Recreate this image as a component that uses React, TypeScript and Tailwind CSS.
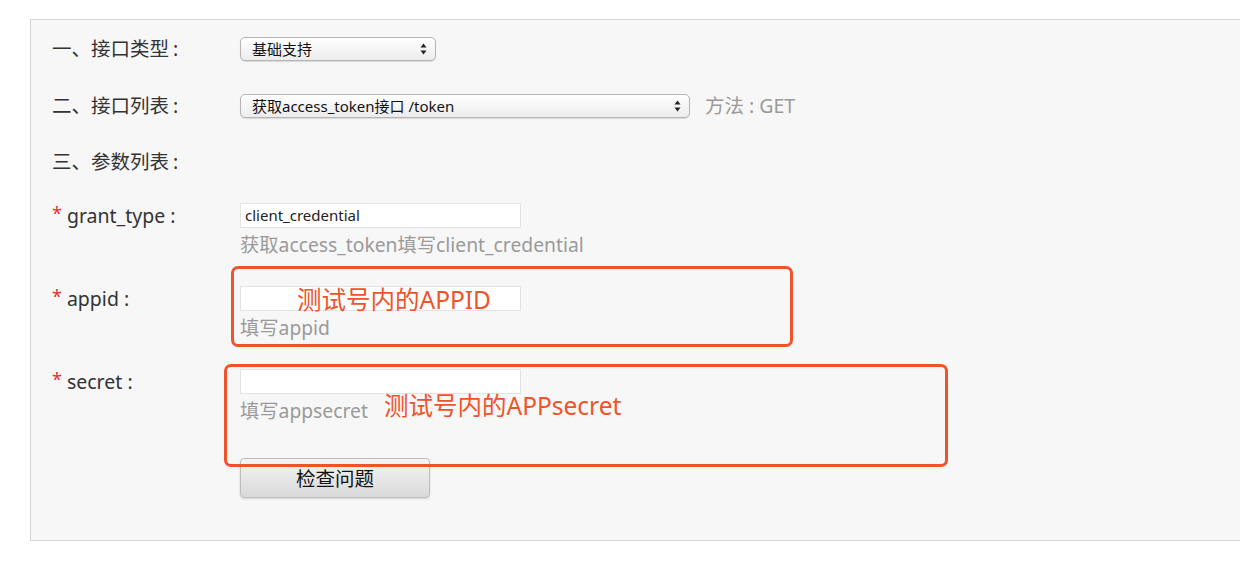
import React from "react";

const font = { fontFamily: '"Noto Sans", "Noto Sans CJK SC", sans-serif' };

function Arrows() {
  return (
    <svg width="7" height="12" viewBox="0 0 7 12" className="shrink-0">
      <path d="M3.5 0.5 L6.5 4.5 L0.5 4.5 Z" fill="#222" />
      <path d="M3.5 11.5 L6.5 7.5 L0.5 7.5 Z" fill="#222" />
    </svg>
  );
}

function FakeSelect({ text, width }: { text: string; width: string }) {
  return (
    <div
      className={`${width} h-[24px] flex items-center justify-between pl-[11px] pr-[8px] rounded-[5px] border border-[#b4b4b4] bg-gradient-to-b from-[#ffffff] to-[#ececec] shadow-[0_1px_1px_rgba(0,0,0,0.12)] text-[15px] text-[#111]`}
    >
      <span className="leading-none">{text}</span>
      <Arrows />
    </div>
  );
}

function SectionLabel({ text }: { text: string }) {
  return (
    <div className="w-[188px] shrink-0 text-[19.5px] text-[#333] flex items-center">
      <span>{text}</span>
      <span className="ml-[4px]">:</span>
    </div>
  );
}

function FieldLabel({ name }: { name: string }) {
  return (
    <div className="w-[188px] shrink-0 h-[25px] flex items-center text-[19.5px] text-[#333]">
      <span className="text-[#e8302c] text-[18px] mr-[5px] relative top-[-2px]">*</span>
      <span>{name}</span>
    </div>
  );
}

function TextInput({ value }: { value?: string }) {
  return (
    <div className="w-[281px] h-[25px] bg-white border border-[#e3e3e3] flex items-center pl-[4px] text-[15px] text-[#222]">
      {value}
    </div>
  );
}

export default function App() {
  return (
    <div className="relative w-[1240px] h-[567px] bg-white overflow-hidden" style={font}>
      <div className="pt-[19px] pl-[30px]">
        <div className="h-[522px] bg-[#f7f7f7] border-t border-b border-l border-[#d4d4d4] pl-[21px] pt-[17px]">
          {/* Row 1 */}
          <div className="flex items-center h-[24px]">
            <SectionLabel text="一、接口类型" />
            <FakeSelect text="基础支持" width="w-[196px]" />
          </div>
          {/* Row 2 */}
          <div className="flex items-center h-[24px] mt-[33px]">
            <SectionLabel text="二、接口列表" />
            <FakeSelect text="获取access_token接口 /token" width="w-[450px]" />
            <span className="ml-[15px] text-[19.5px] text-[#9a9a9a]">
              方法<span className="mx-[5px]">:</span>GET
            </span>
          </div>
          {/* Row 3 */}
          <div className="flex items-center h-[24px] mt-[32px]">
            <SectionLabel text="三、参数列表" />
          </div>
          {/* grant_type */}
          <div className="flex mt-[29px]">
            <FieldLabel name="grant_type :" />
            <div className="flex flex-col">
              <TextInput value="client_credential" />
              <div className="mt-[5px] h-[24px] leading-[24px] text-[19.3px] text-[#9a9a9a] whitespace-nowrap">
                获取access_token填写client_credential
              </div>
            </div>
          </div>
          {/* appid */}
          <div className="flex mt-[29px]">
            <FieldLabel name="appid :" />
            <div className="flex flex-col">
              <TextInput />
              <div className="mt-[5px] h-[24px] leading-[24px] text-[19.3px] text-[#9a9a9a]">填写appid</div>
            </div>
          </div>
          {/* secret */}
          <div className="flex mt-[29px]">
            <FieldLabel name="secret :" />
            <div className="flex flex-col">
              <TextInput />
              <div className="mt-[5px] h-[24px] leading-[24px] text-[19.3px] text-[#9a9a9a]">填写appsecret</div>
            </div>
          </div>
          {/* button */}
          <div className="flex mt-[35px]">
            <div className="w-[188px] shrink-0" />
            <button className="w-[190px] h-[40px] pt-[2px] rounded-[4px] border border-[#bdbdbd] bg-gradient-to-b from-[#f5f5f5] to-[#d9d9d9] shadow-[0_1px_2px_rgba(0,0,0,0.15)] text-[19.5px] text-[#111]">
              检查问题
            </button>
          </div>
        </div>
      </div>

      {/* annotations */}
      <div className="absolute left-[231px] top-[266px] w-[562px] h-[81px] border-[3px] border-[#f0532a] rounded-[7px]" />
      <div className="absolute left-[297px] top-[284px] text-[24.5px] leading-[32px] text-[#f0532a] whitespace-nowrap">测试号内的APPID</div>
      <div className="absolute left-[224px] top-[364px] w-[724px] h-[103px] border-[3px] border-[#f0532a] rounded-[7px]" />
      <div className="absolute left-[384px] top-[390px] text-[24.5px] leading-[32px] text-[#f0532a] whitespace-nowrap">测试号内的APPsecret</div>
    </div>
  );
}
